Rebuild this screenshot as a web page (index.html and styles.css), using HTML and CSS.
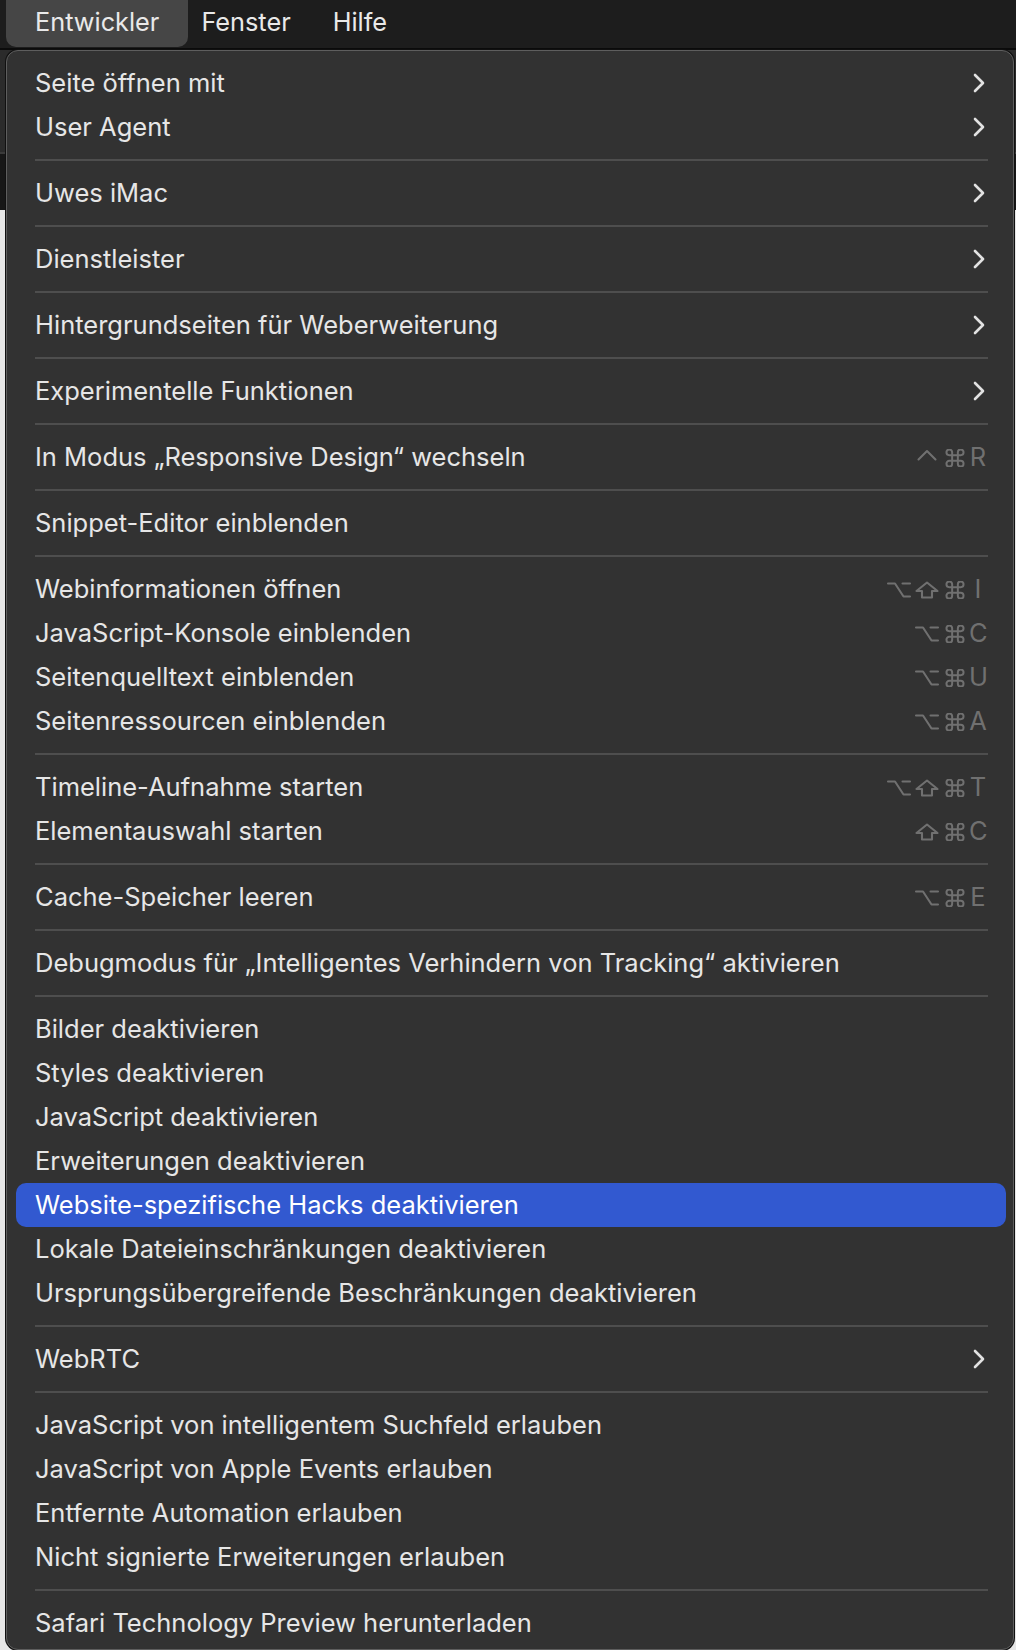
FILE: index.html
```html
<!DOCTYPE html>
<html lang="de">
<head>
<meta charset="utf-8">
<title>Entwickler-Menü</title>
<link rel="stylesheet" href="styles.css">
</head>
<body>
<svg class="defs" width="0" height="0" aria-hidden="true">
  <defs>
    <symbol id="k-opt" viewBox="0 0 28 18"><path d="M3 2.5 H10 L18.5 15.5 H25 M17.5 2.5 H25"/></symbol>
    <symbol id="k-shift" viewBox="0 0 28 18"><path d="M14 1.5 L24.5 10 H19 V16.5 H9 V10 H3.5 Z"/></symbol>
    <symbol id="k-cmd" viewBox="0 0 28 18"><path transform="translate(14 9) scale(0.95) translate(-12 -12)" d="M15 6v12a3 3 0 1 0 3-3H6a3 3 0 1 0 3 3V6a3 3 0 1 0-3 3h12a3 3 0 1 0-3-3"/></symbol>
    <symbol id="k-ctrl" viewBox="0 0 28 18"><path d="M5.5 10.5 L14 2 L22.5 10.5"/></symbol>
  </defs>
</svg>
<div class="menubar">
  <span class="mb-item active">Entwickler</span>
  <span class="mb-item">Fenster</span>
  <span class="mb-item">Hilfe</span>
</div>
<div class="backdrop">
  <div class="bd-toolbar"></div>
  <div class="bd-line"></div>
  <div class="bd-tabs"></div>
  <div class="bd-page"></div>
</div>

<div class="menu">
  <div class="item"><span class="label">Seite öffnen mit</span><svg class="chev" viewBox="0 0 12 20"><polyline points="2,2 10,10 2,18"/></svg></div>
  <div class="item"><span class="label">User Agent</span><svg class="chev" viewBox="0 0 12 20"><polyline points="2,2 10,10 2,18"/></svg></div>
  <div class="sep"></div>
  <div class="item"><span class="label">Uwes iMac</span><svg class="chev" viewBox="0 0 12 20"><polyline points="2,2 10,10 2,18"/></svg></div>
  <div class="sep"></div>
  <div class="item"><span class="label">Dienstleister</span><svg class="chev" viewBox="0 0 12 20"><polyline points="2,2 10,10 2,18"/></svg></div>
  <div class="sep"></div>
  <div class="item"><span class="label">Hintergrundseiten für Weberweiterung</span><svg class="chev" viewBox="0 0 12 20"><polyline points="2,2 10,10 2,18"/></svg></div>
  <div class="sep"></div>
  <div class="item"><span class="label">Experimentelle Funktionen</span><svg class="chev" viewBox="0 0 12 20"><polyline points="2,2 10,10 2,18"/></svg></div>
  <div class="sep"></div>
  <div class="item"><span class="label">In Modus „Responsive Design“ wechseln</span><span class="sc"><svg class="mod"><use href="#k-ctrl"/></svg><svg class="mod"><use href="#k-cmd"/></svg><span class="key">R</span></span></div>
  <div class="sep"></div>
  <div class="item"><span class="label">Snippet-Editor einblenden</span></div>
  <div class="sep"></div>
  <div class="item"><span class="label">Webinformationen öffnen</span><span class="sc"><svg class="mod"><use href="#k-opt"/></svg><svg class="mod"><use href="#k-shift"/></svg><svg class="mod"><use href="#k-cmd"/></svg><span class="key">I</span></span></div>
  <div class="item"><span class="label">JavaScript-Konsole einblenden</span><span class="sc"><svg class="mod"><use href="#k-opt"/></svg><svg class="mod"><use href="#k-cmd"/></svg><span class="key">C</span></span></div>
  <div class="item"><span class="label">Seitenquelltext einblenden</span><span class="sc"><svg class="mod"><use href="#k-opt"/></svg><svg class="mod"><use href="#k-cmd"/></svg><span class="key">U</span></span></div>
  <div class="item"><span class="label">Seitenressourcen einblenden</span><span class="sc"><svg class="mod"><use href="#k-opt"/></svg><svg class="mod"><use href="#k-cmd"/></svg><span class="key">A</span></span></div>
  <div class="sep"></div>
  <div class="item"><span class="label">Timeline-Aufnahme starten</span><span class="sc"><svg class="mod"><use href="#k-opt"/></svg><svg class="mod"><use href="#k-shift"/></svg><svg class="mod"><use href="#k-cmd"/></svg><span class="key">T</span></span></div>
  <div class="item"><span class="label">Elementauswahl starten</span><span class="sc"><svg class="mod"><use href="#k-shift"/></svg><svg class="mod"><use href="#k-cmd"/></svg><span class="key">C</span></span></div>
  <div class="sep"></div>
  <div class="item"><span class="label">Cache-Speicher leeren</span><span class="sc"><svg class="mod"><use href="#k-opt"/></svg><svg class="mod"><use href="#k-cmd"/></svg><span class="key">E</span></span></div>
  <div class="sep"></div>
  <div class="item"><span class="label">Debugmodus für „Intelligentes Verhindern von Tracking“ aktivieren</span></div>
  <div class="sep"></div>
  <div class="item"><span class="label">Bilder deaktivieren</span></div>
  <div class="item"><span class="label">Styles deaktivieren</span></div>
  <div class="item"><span class="label">JavaScript deaktivieren</span></div>
  <div class="item"><span class="label">Erweiterungen deaktivieren</span></div>
  <div class="item selected"><span class="label">Website-spezifische Hacks deaktivieren</span></div>
  <div class="item"><span class="label">Lokale Dateieinschränkungen deaktivieren</span></div>
  <div class="item"><span class="label">Ursprungsübergreifende Beschränkungen deaktivieren</span></div>
  <div class="sep"></div>
  <div class="item"><span class="label">WebRTC</span><svg class="chev" viewBox="0 0 12 20"><polyline points="2,2 10,10 2,18"/></svg></div>
  <div class="sep"></div>
  <div class="item"><span class="label">JavaScript von intelligentem Suchfeld erlauben</span></div>
  <div class="item"><span class="label">JavaScript von Apple Events erlauben</span></div>
  <div class="item"><span class="label">Entfernte Automation erlauben</span></div>
  <div class="item"><span class="label">Nicht signierte Erweiterungen erlauben</span></div>
  <div class="sep"></div>
  <div class="item"><span class="label">Safari Technology Preview herunterladen</span></div>
</div>
</body>
</html>
```

FILE: styles.css
```css
html, body {
  margin: 0;
  padding: 0;
}
body {
  width: 1016px;
  height: 1650px;
  overflow: hidden;
  position: relative;
  background: #e6e6e6;
  font-family: Inter, "Noto Sans", "Liberation Sans", sans-serif;
  -webkit-font-smoothing: antialiased;
}
.defs {
  position: absolute;
  width: 0;
  height: 0;
  overflow: hidden;
}

/* ---------- menu bar ---------- */
.menubar {
  height: 48px;
  background: #1d1d1d;
  display: flex;
  align-items: flex-start;
  padding-left: 14px;
  border-bottom: 2px solid #0b0b0b;
}
.mb-item {
  height: 47px;
  line-height: 43px;
  padding: 0 21px;
  font-size: 25.3px;
  color: #e9e9e9;
}
.mb-item.active {
  background: #464646;
  border-radius: 0 0 10px 10px;
  padding: 0 29px;
  margin: 0 -8px;
}

/* ---------- window behind the menu ---------- */
.backdrop {
  display: flex;
  flex-direction: column;
}
.bd-toolbar {
  height: 102px;
  background: #2b2b2b;
}
.bd-line {
  height: 2px;
  background: #3a3a3a;
}
.bd-tabs {
  height: 56px;
  background: #171717;
}
.bd-page {
  height: 1440px;
  background: #e6e6e6;
}

/* ---------- dropdown menu ---------- */
.menu {
  position: absolute;
  top: 50px;
  left: 6px;
  width: 1008px;
  height: 1600px;
  box-sizing: border-box;
  background: #323232;
  border: 1px solid #5e5e5e;
  border-radius: 12px;
  box-shadow: 0 0 0 1px #101010;
  padding: 10px 7px 4px 9px;
  display: flex;
  flex-direction: column;
}
.item {
  height: 44px;
  flex: none;
  box-sizing: border-box;
  display: flex;
  align-items: center;
  padding: 0 19px 2px;
  color: #e6e6e6;
  font-size: 25.5px;
  border-radius: 10px;
}
.item .label {
  flex: 1;
  white-space: nowrap;
}
.item.selected {
  background: #3259d0;
  color: #ffffff;
}
.chev {
  width: 12px;
  height: 20px;
  margin: 2px 2px 0 0;
  fill: none;
  stroke: #e2e2e2;
  stroke-width: 2.6;
  stroke-linecap: round;
  stroke-linejoin: round;
}
.sep {
  height: 22px;
  flex: none;
  margin: 0 18px 0 19px;
  display: flex;
  align-items: center;
}
.sep::before {
  content: "";
  display: block;
  width: 100%;
  height: 2px;
  background: #4e4e4e;
}

/* ---------- keyboard shortcuts ---------- */
.sc {
  display: flex;
  align-items: center;
  color: #707070;
}
.mod {
  width: 28px;
  height: 18px;
  margin-top: 4px;
  fill: none;
  stroke: #707070;
  stroke-width: 2.1;
  stroke-linecap: round;
  stroke-linejoin: round;
}
.key {
  width: 18px;
  text-align: center;
  font-size: 25.5px;
}
```
